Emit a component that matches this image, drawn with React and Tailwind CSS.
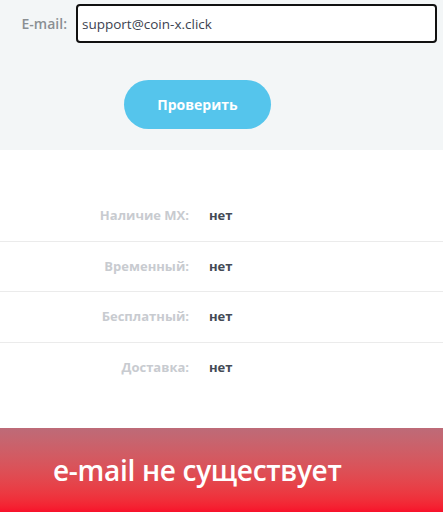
import React from 'react';

const rows = [
    { label: 'Наличие MX:', value: 'нет' },
    { label: 'Временный:', value: 'нет' },
    { label: 'Бесплатный:', value: 'нет' },
    { label: 'Доставка:', value: 'нет' },
];

const App = () => {
    return (
        <div className="w-[443px] h-[512px] overflow-hidden bg-white font-['Open_Sans',sans-serif]">
            <div className="h-[150px] bg-[#f3f6f7] pt-[4px]">
                <div className="flex items-center">
                    <label className="w-[76px] pr-[9px] text-right text-[14px] font-semibold text-[#8a8f93]">E-mail:</label>
                    <input
                        type="text"
                        defaultValue="support@coin-x.click"
                        className="w-[361px] h-[39px] border-2 border-[#111] rounded-[4px] bg-white px-[4px] text-[13.5px] text-[#3c4250] outline-none"
                    />
                </div>
                <div className="pt-[37px] pl-[124px]">
                    <button className="w-[147px] h-[49px] rounded-full bg-[#55c5ec] text-white text-[14px] font-bold">
                        Проверить
                    </button>
                </div>
            </div>

            <div className="h-[278px] pt-[41px]">
                {rows.map((row, i) => (
                    <div
                        key={row.label}
                        className={`flex items-center h-[50.5px] ${i < rows.length - 1 ? 'border-b border-[#ebebeb]' : ''}`}
                    >
                        <div className="w-[189px] text-right text-[13px] font-bold text-[#c8cbd0]">{row.label}</div>
                        <div className="pl-[20px] text-[13px] font-bold text-[#444a55]">{row.value}</div>
                    </div>
                ))}
            </div>

            <div className="h-[84px] bg-gradient-to-b from-[#bd6b78] to-[#f8102a] flex items-center pl-[53px]">
                <span className="text-white text-[28px] font-semibold tracking-[-0.3px]">e-mail не существует</span>
            </div>
        </div>
    );
};

export default App;
